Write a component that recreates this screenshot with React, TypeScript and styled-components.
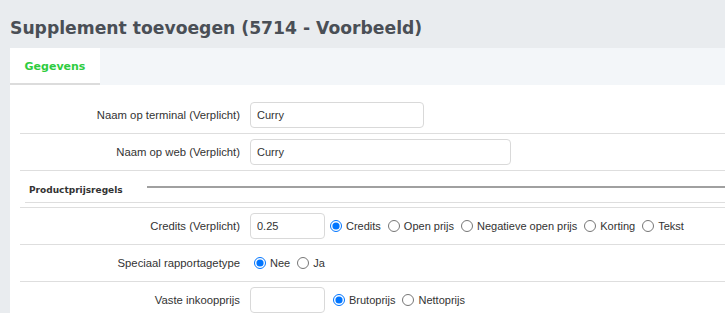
import React from "react";
import styled, { createGlobalStyle } from "styled-components";

const Global = createGlobalStyle`
  html, body { margin: 0; padding: 0; }
  body {
    background: #e9ecef;
    font-family: "Liberation Sans", Arial, sans-serif;
    font-size: 11px;
    color: #333;
  }
`;

const Page = styled.div`
  padding-left: 10px;
  height: 313px;
  overflow: hidden;
`;

const Title = styled.h1`
  margin: 0;
  padding-top: 17px;
  height: 48px;
  box-sizing: border-box;
  font-family: "DejaVu Sans", Verdana, sans-serif;
  font-weight: bold;
  font-size: 17.2px;
  line-height: 22px;
  color: #4a4f56;
  white-space: nowrap;
`;

const Panel = styled.div`
  background: #fff;
  min-height: 300px;
`;

const TabBar = styled.div`
  display: flex;
  height: 37px;
  background: #f3f6f9;
`;

const Tab = styled.div<{ $active?: boolean }>`
  width: 90px;
  box-sizing: border-box;
  background: ${(p) => (p.$active ? "#fff" : "transparent")};
  border-bottom: 2px solid ${(p) => (p.$active ? "#dcdcdc" : "transparent")};
  font-family: "DejaVu Sans", Verdana, sans-serif;
  font-weight: bold;
  font-size: 11px;
  color: #2ecc40;
  display: flex;
  align-items: center;
  justify-content: center;
  padding-top: 2px;
`;

const Form = styled.div`
  padding-top: 12px;
  margin-left: 10px;
`;

const Row = styled.div`
  display: grid;
  grid-template-columns: 230px 1fr;
  border-bottom: 1px solid #dedede;
  min-height: 36px;
`;

const Label = styled.div`
  text-align: right;
  padding-right: 10px;
  display: flex;
  align-items: center;
  justify-content: flex-end;
  font-size: 11.3px;
  color: #333;
`;

const Field = styled.div`
  display: flex;
  align-items: center;
  padding: 5px 0;
`;

const Input = styled.input<{ $w: number }>`
  width: ${(p) => p.$w}px;
  height: 26px;
  box-sizing: border-box;
  border: 1px solid #d9d9d9;
  border-radius: 4px;
  padding: 0 6px;
  font-family: "Liberation Sans", Arial, sans-serif;
  font-size: 11px;
  color: #333;
  outline: none;
  margin: 0;
`;

const Option = styled.label<{ $first?: number }>`
  display: inline-flex;
  align-items: center;
  margin-left: ${(p) => (p.$first !== undefined ? p.$first : 2)}px;
  color: #333;
  white-space: nowrap;
`;

const Radio = styled.input`
  margin: 0 4px 0 5px;
  width: 12px;
  height: 12px;
`;

const SectionRow = styled.div`
  border-bottom: 1px solid #dedede;
  padding-left: 5px;
  padding-bottom: 4px;
`;

const SectionInner = styled.div`
  display: flex;
  align-items: center;
  height: 31px;
  border-bottom: 1px solid #dedede;
`;

const Legend = styled.div`
  font-family: "DejaVu Sans", Verdana, sans-serif;
  font-weight: bold;
  font-size: 9px;
  color: #333;
  padding-left: 4px;
  margin-top: 6px;
`;

const LegendLine = styled.div`
  flex: 1;
  margin-left: 24px;
  border-top: 2px solid #a0a0a0;
`;

type Opt = { label: string; checked?: boolean };

const Radios = ({ name, opts, first }: { name: string; opts: Opt[]; first?: number }) => (
  <>
    {opts.map((o, i) => (
      <Option key={o.label} $first={i === 0 ? first : undefined}>
        <Radio type="radio" name={name} defaultChecked={o.checked} />
        {o.label}
      </Option>
    ))}
  </>
);

export default function App() {
  return (
    <Page>
      <Global />
      <Title>Supplement toevoegen (5714 - Voorbeeld)</Title>
      <Panel>
        <TabBar>
          <Tab $active>Gegevens</Tab>
        </TabBar>
        <Form>
          <Row>
            <Label>Naam op terminal (Verplicht)</Label>
            <Field>
              <Input $w={174} defaultValue="Curry" />
            </Field>
          </Row>
          <Row>
            <Label>Naam op web (Verplicht)</Label>
            <Field>
              <Input $w={261} defaultValue="Curry" />
            </Field>
          </Row>
          <SectionRow>
            <SectionInner>
              <Legend>Productprijsregels</Legend>
              <LegendLine />
            </SectionInner>
          </SectionRow>
          <Row>
            <Label>Credits (Verplicht)</Label>
            <Field>
              <Input $w={75} defaultValue="0.25" />
              <Radios
                name="credits"
                first={0}
                opts={[
                  { label: "Credits", checked: true },
                  { label: "Open prijs" },
                  { label: "Negatieve open prijs" },
                  { label: "Korting" },
                  { label: "Tekst" },
                ]}
              />
            </Field>
          </Row>
          <Row>
            <Label>Speciaal rapportagetype</Label>
            <Field>
              <Radios
                name="speciaal"
                first={-1}
                opts={[{ label: "Nee", checked: true }, { label: "Ja" }]}
              />
            </Field>
          </Row>
          <Row>
            <Label>Vaste inkoopprijs</Label>
            <Field>
              <Input $w={75} defaultValue="" />
              <Radios
                name="inkoop"
                first={3}
                opts={[{ label: "Brutoprijs", checked: true }, { label: "Nettoprijs" }]}
              />
            </Field>
          </Row>
        </Form>
      </Panel>
    </Page>
  );
}
